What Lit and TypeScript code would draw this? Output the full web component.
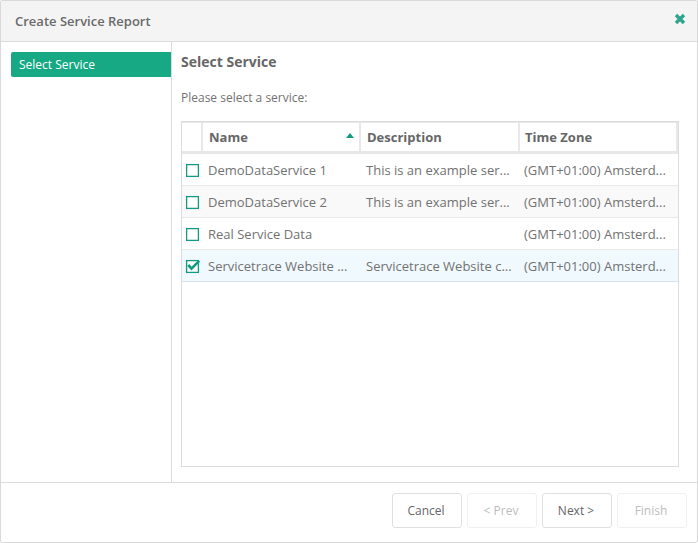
import { LitElement, html, css, svg } from "lit";
import { customElement } from "lit/decorators.js";

const rows = [
  { name: "DemoDataService 1", desc: "This is an example ser...", tz: "(GMT+01:00) Amsterd...", cls: "" },
  { name: "DemoDataService 2", desc: "This is an example ser...", tz: "(GMT+01:00) Amsterd...", cls: "alt" },
  { name: "Real Service Data", desc: "", tz: "(GMT+01:00) Amsterd...", cls: "" },
  { name: "Servicetrace Website ...", desc: "Servicetrace Website c...", tz: "(GMT+01:00) Amsterd...", cls: "sel" },
];

@customElement("app-root")
export class AppRoot extends LitElement {
  static styles = css`
    :host { display: block; width: 698px; height: 543px; font-family: "Open Sans", sans-serif; color: #727272; font-size: 13px; }
    * { box-sizing: border-box; }
    .dialog { width: 698px; height: 543px; border: 1px solid #d9d9d9; border-radius: 2px; display: flex; flex-direction: column; background: #fff; }
    .head { height: 41px; flex: none; background: #f4f4f4; border-bottom: 1px solid #dcdcdc; display: flex; align-items: center; justify-content: space-between; padding: 0 11px 0 14px; }
    .title { font-weight: 600; font-size: 13px; color: #6a6a6a; }
    .close { display: block; width: 12px; height: 12px; margin-top: -5px; }
    .main { flex: 1; display: flex; min-height: 0; }
    .side { width: 171px; flex: none; border-right: 1px solid #dcdcdc; padding: 10px 0 0 10px; }
    .step { height: 25px; background: #17a884; color: #fff; border-radius: 2px 0 0 2px; padding-left: 8px; line-height: 25px; font-size: 12px; }
    .content { flex: 1; padding: 10px 18px 15px 9px; display: flex; flex-direction: column; min-width: 0; }
    h2 { margin: 0; font-size: 14px; font-weight: 700; line-height: 20px; color: #666; }
    .prompt { margin: 17px 0 0; font-size: 12px; line-height: 18px; color: #727272; }
    .grid { margin-top: 14px; flex: 1; border: 1px solid #dcdcdc; min-height: 0; }
    .row { display: grid; grid-template-columns: 21px 158px 159px 158px; }
    .hrow { height: 32px; width: 496px; border: 1px solid #e8e8e8; border-width: 1px 0 3px 0; font-weight: 700; color: #666; align-items: center; }
    .hrow > div { height: 100%; border-right: 2px solid #e8e8e8; padding-left: 6px; line-height: 28px; position: relative; }
    .hrow > div:last-child { padding-left: 5px; }
    .sort { position: absolute; right: 5px; top: 10px; width: 8px; height: 5px; }
    .drow { height: 32px; border-bottom: 1px solid #e8e8e8; line-height: 33px; font-size: 13px; }
    .drow > div { padding-left: 5px; white-space: nowrap; overflow: hidden; }
    .drow > div:last-child { padding-left: 4px; }
    .drow > .check { padding: 10px 0 0 4px; overflow: visible; }
    .alt { background: #f9f9f9; }
    .sel { background: #f0f9fe; border-bottom-color: #d8e4ea; }
    .box { display: block; width: 13px; height: 13px; overflow: visible; }
    .foot { height: 60px; flex: none; border-top: 1px solid #dcdcdc; display: flex; justify-content: flex-end; align-items: flex-start; gap: 5px; padding: 10px 10px 0 0; }
    button { width: 70px; height: 35px; background: #fff; border: 1px solid #e0e0e0; border-radius: 3px; font: 12px "Open Sans", sans-serif; color: #666; padding: 0 2px 0 0; }
    button[disabled] { color: #bdbdbd; border-color: #f0f0f0; }
  `;

  private box(checked: boolean) {
    return html`<svg class="box" viewBox="0 0 13 13">
      <rect x="0.6" y="0.6" width="11.8" height="11.8" fill="#fff" stroke="#149a80" stroke-width="1.3"></rect>
      ${checked ? svg`<path d="M2.2 5 L5.5 8.6 L13.2 0.8" fill="none" stroke="#149a80" stroke-width="2.6"></path>` : ""}
    </svg>`;
  }

  render() {
    return html`
      <div class="dialog">
        <div class="head">
          <span class="title">Create Service Report</span>
          <svg class="close" viewBox="0 0 12 12"><path d="M2 2 L10 10 M10 2 L2 10" stroke="#2fa58e" stroke-width="3.4" fill="none"></path></svg>
        </div>
        <div class="main">
          <div class="side"><div class="step">Select Service</div></div>
          <div class="content">
            <h2>Select Service</h2>
            <p class="prompt">Please select a service:</p>
            <div class="grid">
              <div class="row hrow">
                <div></div>
                <div>Name<svg class="sort" viewBox="0 0 8 5"><path d="M4 0 L8 5 L0 5 Z" fill="#149a80"></path></svg></div>
                <div>Description</div>
                <div>Time Zone</div>
              </div>
              ${rows.map(
                (r) => html`<div class="row drow ${r.cls}">
                  <div class="check">${this.box(r.cls === "sel")}</div>
                  <div>${r.name}</div>
                  <div>${r.desc}</div>
                  <div>${r.tz}</div>
                </div>`
              )}
            </div>
          </div>
        </div>
        <div class="foot">
          <button>Cancel</button>
          <button disabled>&lt; Prev</button>
          <button>Next &gt;</button>
          <button disabled>Finish</button>
        </div>
      </div>
    `;
  }
}
